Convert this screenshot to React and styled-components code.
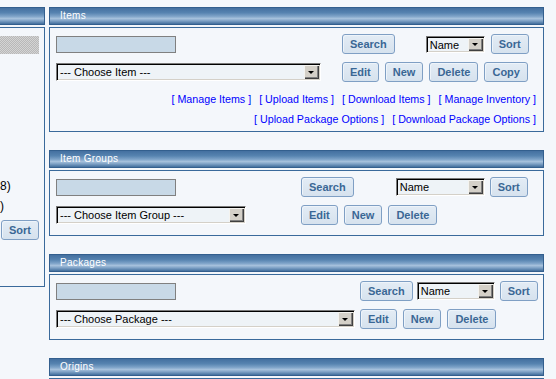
import React from "react";
import styled, { createGlobalStyle } from "styled-components";

const GlobalStyle = createGlobalStyle`
  html, body { margin: 0; padding: 0; background: #f4f7fb; }
  body { font-family: "Liberation Sans", Arial, sans-serif; font-size: 11px; color: #000; }
  * { box-sizing: border-box; }
`;

const Page = styled.div`
  display: flex;
  align-items: flex-start;
  gap: 4px;
  padding-top: 7px;
  width: 556px;
  height: 379px;
  overflow: hidden;
`;

const SideColumn = styled.div`
  width: 45px;
  flex: none;
  display: flex;
  flex-direction: column;
  gap: 2px;
`;

const MainColumn = styled.div`
  width: 495px;
  flex: none;
  display: flex;
  flex-direction: column;
  gap: 18px;
`;

const Section = styled.section`
  display: flex;
  flex-direction: column;
  gap: 2px;
`;

const SectionHeader = styled.div`
  height: 18px;
  border: 1px solid #335f8e;
  border-left: ${(p) => (p.$clipped ? "none" : "1px solid #335f8e")};
  background: linear-gradient(
    180deg,
    #4470a0 0%,
    #5683b0 30%,
    #7ea3c8 52%,
    #a6c1dc 66%,
    #7fa2c6 80%,
    #436f9d 100%
  );
  color: #fff;
  font-family: "Liberation Sans", Arial, sans-serif;
  font-size: 10px;
  letter-spacing: 0.3px;
  line-height: 16px;
  padding-left: 10px;
  white-space: nowrap;
`;

const Panel = styled.div`
  border: 1px solid #3a6a9b;
  padding: 6px 0 ${(p) => p.$padBottom}px 6px;
`;

const SidePanel = styled.div`
  height: 260px;
  border: 1px solid #3a6a9b;
  border-left: none;
  padding-top: 8px;
  display: flex;
  flex-direction: column;
  overflow: hidden;
`;

const DisabledField = styled.div`
  width: 39px;
  height: 18px;
  background-color: #c4c4c4;
  background-image: repeating-conic-gradient(#b8b8b8 0 25%, #d4d4d4 0 50%);
  background-size: 2px 2px;
`;

const SideText = styled.div`
  font-size: 12px;
  line-height: 20px;
  white-space: nowrap;
  margin-top: ${(p) => p.$mt || 0}px;
`;

const Row = styled.div`
  display: flex;
  align-items: center;
  height: 20px;
  margin-top: ${(p) => p.$mt || 0}px;
  & + & {
    margin-top: 8px;
  }
`;

const LeftCell = styled.div`
  width: ${(p) => p.$w}px;
  flex: none;
  display: flex;
  align-items: center;
`;

const RightCell = styled.div`
  display: flex;
  align-items: center;
  gap: ${(p) => (p.$gap != null ? p.$gap : 6)}px;
`;

const TextField = styled.input`
  width: 120px;
  height: 17px;
  border: 1px solid #808080;
  background: #c8d9e7;
  padding: 0 2px;
  margin: 0;
  font: 11px "Liberation Sans", Arial, sans-serif;
  outline: none;
`;

const Button = styled.button`
  height: 20px;
  padding: 0 7px;
  margin: 0 0 0 ${(p) => p.$ml || 0}px;
  border: 1px solid #7f9fc4;
  border-radius: 3px;
  background: linear-gradient(180deg, #e3ecf5 0%, #d6e2ee 100%);
  box-shadow: inset 1px 1px 0 #eef4fa;
  color: #3a6795;
  font-family: "Liberation Sans", Arial, sans-serif;
  font-weight: bold;
  font-size: 11px;
  line-height: 18px;
  white-space: nowrap;
  cursor: pointer;
`;

const SelectBox = styled.div`
  width: ${(p) => p.$w}px;
  height: ${(p) => p.$h || 18}px;
  margin-left: ${(p) => p.$ml || 0}px;
  display: flex;
  align-items: stretch;
  padding: 1px;
  border-top: 1px solid #7a7a7a;
  border-left: 1px solid #7a7a7a;
  border-bottom: 1px solid #ffffff;
  border-right: 1px solid #ffffff;
  box-shadow: inset 1px 1px 0 #000, inset -1px -1px 0 #d4d0c8;
  background: #eef3f7;
  flex: none;
`;

const SelectValue = styled.span`
  flex: 1;
  padding-left: 2px;
  font-family: "Liberation Sans", Arial, sans-serif;
  font-size: 11px;
  line-height: 14px;
  white-space: nowrap;
  overflow: hidden;
`;

const ArrowButton = styled.span`
  width: 15px;
  flex: none;
  background: #d4d0c8;
  box-shadow: inset 1px 1px 0 #f4f3ef, inset -1px -1px 0 #404040, inset -2px -2px 0 #808080;
  display: flex;
  align-items: center;
  justify-content: center;
  &::after {
    content: "";
    width: 0;
    height: 0;
    margin-left: -1px;
    border-left: 3px solid transparent;
    border-right: 3px solid transparent;
    border-top: 3px solid #000;
  }
`;

const LinkBlock = styled.div`
  margin-top: 7px;
  padding-right: 7px;
  display: flex;
  flex-direction: column;
  align-items: flex-end;
  font-family: "Liberation Sans", Arial, sans-serif;
  font-size: 10.7px;
  line-height: 20px;
`;

const LinkLine = styled.div`
  white-space: nowrap;
`;

const NavLink = styled.a`
  color: #0000ff;
  text-decoration: none;
  margin-left: ${(p) => (p.$first ? 0 : 5)}px;
`;

function Select({ w, h, ml, value }) {
  return (
    <SelectBox $w={w} $h={h} $ml={ml}>
      <SelectValue>{value}</SelectValue>
      <ArrowButton />
    </SelectBox>
  );
}

function Links({ items }) {
  return (
    <LinkLine>
      {items.map((t, i) => (
        <React.Fragment key={t}>
          {i > 0 ? " " : ""}
          <NavLink href="#" $first={i === 0}>
            [ {t} ]
          </NavLink>
        </React.Fragment>
      ))}
    </LinkLine>
  );
}

export default function App() {
  return (
    <>
      <GlobalStyle />
      <Page>
        <SideColumn>
          <SectionHeader $clipped />
          <SidePanel>
            <DisabledField />
            <SideText $mt={122}>8)</SideText>
            <SideText>)</SideText>
            <Row $mt={4}>
              <Button $ml={1}>Sort</Button>
            </Row>
          </SidePanel>
        </SideColumn>

        <MainColumn>
          <Section>
            <SectionHeader>Items</SectionHeader>
            <Panel $padBottom={2}>
              <Row>
                <LeftCell $w={286}>
                  <TextField />
                </LeftCell>
                <RightCell>
                  <Button>Search</Button>
                  <Select w={59} h={17} ml={25} value="Name" />
                  <Button>Sort</Button>
                </RightCell>
              </Row>
              <Row>
                <LeftCell $w={286}>
                  <Select w={265} value="--- Choose Item ---" />
                </LeftCell>
                <RightCell>
                  <Button>Edit</Button>
                  <Button>New</Button>
                  <Button>Delete</Button>
                  <Button>Copy</Button>
                </RightCell>
              </Row>
              <LinkBlock>
                <Links items={["Manage Items", "Upload Items", "Download Items", "Manage Inventory"]} />
                <Links items={["Upload Package Options", "Download Package Options"]} />
              </LinkBlock>
            </Panel>
          </Section>

          <Section>
            <SectionHeader>Item Groups</SectionHeader>
            <Panel $padBottom={10}>
              <Row>
                <LeftCell $w={245}>
                  <TextField />
                </LeftCell>
                <RightCell $gap={5}>
                  <Button>Search</Button>
                  <Select w={89} ml={37} value="Name" />
                  <Button>Sort</Button>
                </RightCell>
              </Row>
              <Row>
                <LeftCell $w={245}>
                  <Select w={190} value="--- Choose Item Group ---" />
                </LeftCell>
                <RightCell>
                  <Button>Edit</Button>
                  <Button>New</Button>
                  <Button>Delete</Button>
                </RightCell>
              </Row>
            </Panel>
          </Section>

          <Section>
            <SectionHeader>Packages</SectionHeader>
            <Panel $padBottom={10}>
              <Row>
                <LeftCell $w={304}>
                  <TextField />
                </LeftCell>
                <RightCell $gap={4}>
                  <Button>Search</Button>
                  <Select w={78} value="Name" />
                  <Button $ml={1}>Sort</Button>
                </RightCell>
              </Row>
              <Row>
                <LeftCell $w={304}>
                  <Select w={299} value="--- Choose Package ---" />
                </LeftCell>
                <RightCell>
                  <Button>Edit</Button>
                  <Button>New</Button>
                  <Button>Delete</Button>
                </RightCell>
              </Row>
            </Panel>
          </Section>

          <Section>
            <SectionHeader>Origins</SectionHeader>
            <Panel $padBottom={10} />
          </Section>
        </MainColumn>
      </Page>
    </>
  );
}
